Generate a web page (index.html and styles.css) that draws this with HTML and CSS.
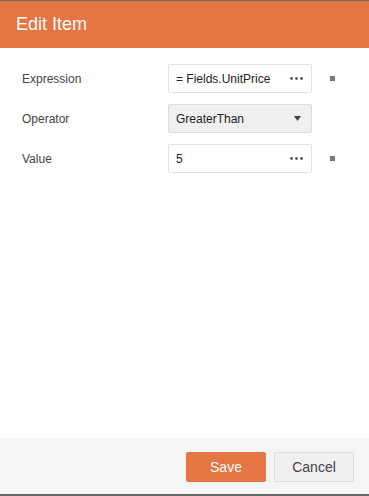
FILE: index.html
```html
<!DOCTYPE html>
<html>
<head>
    <link rel="stylesheet" href="styles.css">
</head>
<body>
<div class="dialog">
    <div class="header">Edit Item</div>
    <div class="content">
        <div class="row">
            <span class="label">Expression</span>
            <div class="field">
                <span class="value">= Fields.UnitPrice</span>
                <svg class="dots" width="13" height="3" viewBox="0 0 13 3"><circle cx="1.5" cy="1.5" r="1.4"/><circle cx="6.5" cy="1.5" r="1.4"/><circle cx="11.5" cy="1.5" r="1.4"/></svg>
            </div>
            <span class="marker"></span>
        </div>
        <div class="row">
            <span class="label">Operator</span>
            <div class="field select">
                <span class="value">GreaterThan</span>
                <svg class="caret" width="7" height="5" viewBox="0 0 7 5"><polygon points="0,0 7,0 3.5,5"/></svg>
            </div>
            <span></span>
        </div>
        <div class="row">
            <span class="label">Value</span>
            <div class="field">
                <span class="value">5</span>
                <svg class="dots" width="13" height="3" viewBox="0 0 13 3"><circle cx="1.5" cy="1.5" r="1.4"/><circle cx="6.5" cy="1.5" r="1.4"/><circle cx="11.5" cy="1.5" r="1.4"/></svg>
            </div>
            <span class="marker"></span>
        </div>
    </div>
    <div class="footer">
        <button class="btn primary">Save</button>
        <button class="btn">Cancel</button>
    </div>
</div>
</body>
</html>
```

FILE: styles.css
```css
* {
    box-sizing: border-box;
}

html, body {
    margin: 0;
    height: 100%;
}

body {
    font-family: "Liberation Sans", Arial, sans-serif;
    color: #333;
    background: #fff;
}

.dialog {
    height: 496px;
    display: flex;
    flex-direction: column;
    border-top: 1px solid #6b6b6b;
    border-bottom: 2px solid #666;
}

.header {
    height: 47px;
    background-color: #e57542;
    color: #fff;
    font-size: 18px;
    padding: 0 16px;
    line-height: 46px;
}

.content {
    flex: 1;
    padding: 16px 0 0 22px;
    display: flex;
    flex-direction: column;
    gap: 11px;
}

.row {
    display: grid;
    grid-template-columns: 128px 144px 5px;
    column-gap: 18px;
    align-items: center;
}

.label {
    font-size: 12px;
    color: #444;
}

.field {
    height: 29px;
    border: 1px solid #e3e3e3;
    border-radius: 2px;
    background: #fff;
    display: flex;
    align-items: center;
    justify-content: space-between;
    padding: 0 8px 0 7px;
    font-size: 12px;
    color: #222;
}

.field.select {
    background: #f0f0f0;
    border-color: #dcdcdc;
    padding-right: 10px;
}

.dots {
    fill: #555;
}

.caret {
    fill: #444;
}

.marker {
    width: 5px;
    height: 5px;
    background: #7a7a7a;
}

.footer {
    height: 56px;
    background: #f5f5f5;
    display: flex;
    justify-content: flex-end;
    align-items: center;
    gap: 8px;
    padding: 1px 15px 0 0;
}

.btn {
    width: 80px;
    height: 30px;
    font-family: "Liberation Sans", Arial, sans-serif;
    font-size: 14px;
    color: #444;
    background: #f0f0f0;
    border: 1px solid #dcdcdc;
    border-radius: 2px;
    padding: 0;
}

.btn.primary {
    background: #e57542;
    border-color: #e57542;
    color: #fff;
}
```
